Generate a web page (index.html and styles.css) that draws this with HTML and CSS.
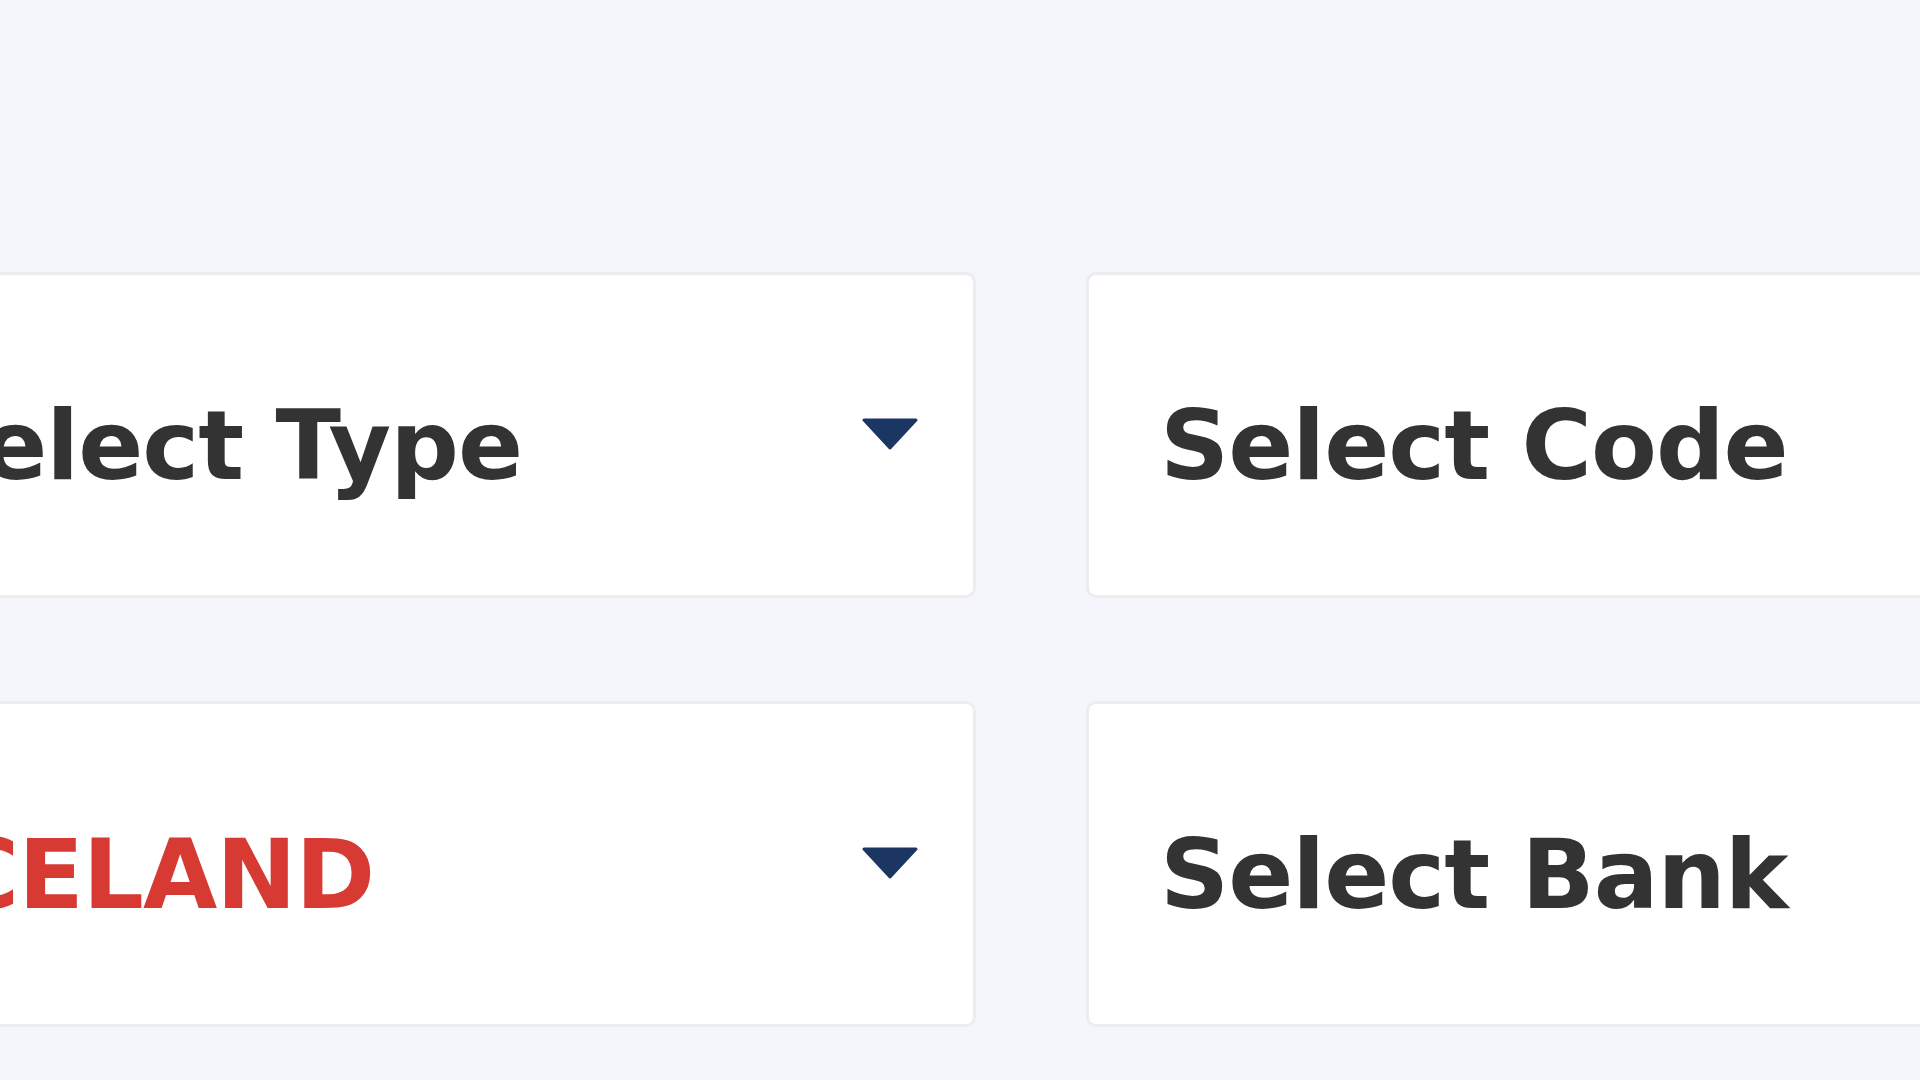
FILE: index.html
```html
<!DOCTYPE html>
<html lang="en">
<head>
<meta charset="utf-8">
<title>Form</title>
<link rel="stylesheet" href="styles.css">
</head>
<body>
<main class="page">
  <form class="form">
    <div class="field">
      <span class="value">Select Type</span>
      <svg class="caret" viewBox="0 0 58 32" aria-hidden="true"><path d="M3 2 H55 L29 30 Z" fill="#1c3663" stroke="#1c3663" stroke-width="3" stroke-linejoin="round"/></svg>
    </div>
    <div class="field">
      <span class="value">Select Code</span>
      <svg class="caret" viewBox="0 0 58 32" aria-hidden="true"><path d="M3 2 H55 L29 30 Z" fill="#1c3663" stroke="#1c3663" stroke-width="3" stroke-linejoin="round"/></svg>
    </div>
    <div class="field">
      <span class="value value-red">ICELAND</span>
      <svg class="caret" viewBox="0 0 58 32" aria-hidden="true"><path d="M3 2 H55 L29 30 Z" fill="#1c3663" stroke="#1c3663" stroke-width="3" stroke-linejoin="round"/></svg>
    </div>
    <div class="field">
      <span class="value">Select Bank</span>
      <svg class="caret" viewBox="0 0 58 32" aria-hidden="true"><path d="M3 2 H55 L29 30 Z" fill="#1c3663" stroke="#1c3663" stroke-width="3" stroke-linejoin="round"/></svg>
    </div>
  </form>
</main>
</body>
</html>
```
FILE: styles.css
```css
html, body {
  margin: 0;
  padding: 0;
}
body {
  width: 1920px;
  height: 1080px;
  overflow: hidden;
  background: #f5f6fc;
  font-family: "DejaVu Sans", Inter, sans-serif;
}
.page {
  padding-top: 272px;
}
.form {
  display: grid;
  grid-template-columns: 1136px 1106px;
  column-gap: 110px;
  row-gap: 103px;
  margin: 0 0 0 -160px;
}
.field {
  box-sizing: border-box;
  height: 326px;
  background: #ffffff;
  border: 3px solid #ececf1;
  border-radius: 10px;
  display: flex;
  align-items: center;
  justify-content: space-between;
  padding: 0 54px 0 71px;
}
.value {
  font-weight: 700;
  font-size: 96px;
  line-height: 1;
  letter-spacing: -1px;
  color: #333333;
  padding-top: 22px;
  white-space: nowrap;
}
.value-red {
  color: #d63a33;
}
.caret {
  width: 58px;
  height: 32px;
  flex: none;
  margin-bottom: 2px;
}
```
